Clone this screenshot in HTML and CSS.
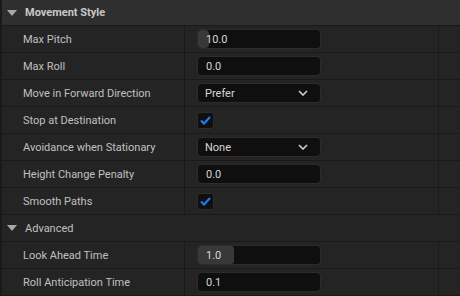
FILE: index.html
```html
<!DOCTYPE html>
<html lang="en">

<head>
    <meta charset="UTF-8">
    <title>movement style</title>
    <link rel="stylesheet" href="styles.css">
</head>

<body>

    <div class="panel">
        <div class="category top">
            <span class="arrow"></span>
            <b>Movement Style</b>
        </div>

        <div class="prop">
            <div class="name">Max Pitch</div>
            <div class="value">
                <div class="num"><span class="handle"></span><span class="txt">10.0</span></div>
            </div>
            <div class="extra"></div>
        </div>

        <div class="prop">
            <div class="name">Max Roll</div>
            <div class="value">
                <div class="num"><span class="txt">0.0</span></div>
            </div>
            <div class="extra"></div>
        </div>

        <div class="prop">
            <div class="name">Move in Forward Direction</div>
            <div class="value">
                <div class="combo">
                    <span class="txt">Prefer</span>
                    <svg class="chev" width="10" height="6" viewBox="0 0 10 6"><path d="M1 1 L5 5 L9 1" fill="none" stroke="#cfcfcf" stroke-width="1.6"/></svg>
                </div>
            </div>
            <div class="extra"></div>
        </div>

        <div class="prop">
            <div class="name">Stop at Destination</div>
            <div class="value">
                <div class="check">
                    <svg width="11" height="9" viewBox="0 0 11 9"><path d="M1 4.5 L4 7.5 L10 1" fill="none" stroke="#1a7ef0" stroke-width="2.2"/></svg>
                </div>
            </div>
            <div class="extra"></div>
        </div>

        <div class="prop">
            <div class="name">Avoidance when Stationary</div>
            <div class="value">
                <div class="combo">
                    <span class="txt">None</span>
                    <svg class="chev" width="10" height="6" viewBox="0 0 10 6"><path d="M1 1 L5 5 L9 1" fill="none" stroke="#cfcfcf" stroke-width="1.6"/></svg>
                </div>
            </div>
            <div class="extra"></div>
        </div>

        <div class="prop">
            <div class="name">Height Change Penalty</div>
            <div class="value">
                <div class="num"><span class="txt">0.0</span></div>
            </div>
            <div class="extra"></div>
        </div>

        <div class="prop">
            <div class="name">Smooth Paths</div>
            <div class="value">
                <div class="check">
                    <svg width="11" height="9" viewBox="0 0 11 9"><path d="M1 4.5 L4 7.5 L10 1" fill="none" stroke="#1a7ef0" stroke-width="2.2"/></svg>
                </div>
            </div>
            <div class="extra"></div>
        </div>

        <div class="category sub">
            <span class="arrow"></span>
            <span>Advanced</span>
        </div>

        <div class="prop">
            <div class="name">Look Ahead Time</div>
            <div class="value">
                <div class="num"><span class="fill"><span class="txt">1.0</span></span></div>
            </div>
            <div class="extra"></div>
        </div>

        <div class="prop">
            <div class="name">Roll Anticipation Time</div>
            <div class="value">
                <div class="num"><span class="txt">0.1</span></div>
            </div>
            <div class="extra"></div>
        </div>
    </div>

</body>

</html>
```

FILE: styles.css
```css
* {
    margin: 0;
    padding: 0;
    box-sizing: border-box;
}

body {
    background: #1a1a1a;
    font-family: Roboto, "Noto Sans", sans-serif;
    font-size: 11px;
    color: #c0c0c0;
}

.panel {
    display: flex;
    flex-direction: column;
    gap: 1px;
    width: 460px;
    height: 296px;
    padding-left: 2px;
    overflow: hidden;
}

.category {
    display: flex;
    align-items: center;
    gap: 8px;
    background: #2f2f2f;
    padding-left: 5px;
    flex-shrink: 0;
}

.category.top {
    height: 25px;
}

.category.top b {
    font-weight: 700;
    color: #c8c8c8;
}

.category.sub {
    height: 26px;
    background: #242424;
}

.arrow {
    width: 0;
    height: 0;
    border-left: 5px solid transparent;
    border-right: 5px solid transparent;
    border-top: 6px solid #a8a8a8;
}

.prop {
    display: grid;
    grid-template-columns: 182px 253px 1fr;
    gap: 1px;
    height: 26px;
    flex-shrink: 0;
}

.prop > div {
    background: #242424;
}

.name {
    display: flex;
    align-items: center;
    padding-left: 21px;
}

.value {
    display: flex;
    align-items: center;
    padding-left: 12px;
}

.num,
.combo {
    width: 124px;
    height: 20px;
    background: #0f0f0f;
    border: 1px solid #2c2c2c;
    border-radius: 4px;
    display: flex;
    align-items: center;
    color: #d6d6d6;
    position: relative;
}

.txt {
    padding-left: 8px;
}

/* drag handle sits over the start of the number */
.handle {
    position: absolute;
    left: 0;
    top: 0;
    width: 11px;
    height: 18px;
    background: #383838;
    border-radius: 4px;
}

.num .txt {
    position: relative;
}

.fill {
    width: 36px;
    height: 18px;
    background: #383838;
    border-radius: 3px;
    display: flex;
    align-items: center;
}

.combo {
    justify-content: space-between;
    padding-right: 12px;
}

.combo .txt {
    padding-left: 7px;
}

.check {
    width: 17px;
    height: 17px;
    background: #0f0f0f;
    border: 1px solid #2c2c2c;
    border-radius: 3px;
    display: flex;
    align-items: center;
    justify-content: center;
}
```
